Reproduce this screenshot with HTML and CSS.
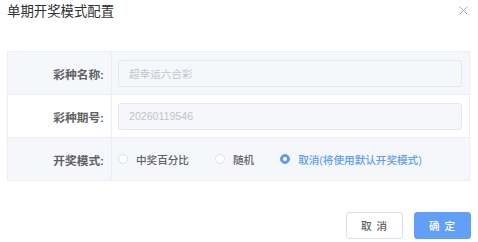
FILE: index.html
```html
<!DOCTYPE html>
<html lang="zh">
<head>
    <meta charset="UTF-8">
    <title>单期开奖模式配置</title>
    <link rel="stylesheet" href="styles.css">
</head>
<body>
    <div class="dialog">
        <div class="dialog-header">
            <span class="dialog-title">单期开奖模式配置</span>
            <svg class="dialog-close" width="9" height="9" viewBox="0 0 9 9">
                <path d="M0.5 0.5 L8.5 8.5 M8.5 0.5 L0.5 8.5" stroke="#a8abb2" stroke-width="1" fill="none"/>
            </svg>
        </div>

        <div class="form-table">
            <div class="form-row striped">
                <div class="form-label">彩种名称:</div>
                <div class="form-value">
                    <div class="input disabled">超幸运六合彩</div>
                </div>
            </div>
            <div class="form-row">
                <div class="form-label">彩种期号:</div>
                <div class="form-value">
                    <div class="input disabled">20260119546</div>
                </div>
            </div>
            <div class="form-row striped">
                <div class="form-label">开奖模式:</div>
                <div class="form-value radios">
                    <label class="radio"><span class="radio-dot"></span>中奖百分比</label>
                    <label class="radio"><span class="radio-dot"></span>随机</label>
                    <label class="radio checked"><span class="radio-dot"></span>取消(将使用默认开奖模式)</label>
                </div>
            </div>
        </div>

        <div class="dialog-footer">
            <button class="btn">取 消</button>
            <button class="btn btn-primary">确 定</button>
        </div>
    </div>
</body>
</html>
```

FILE: styles.css
```css
body {
    margin: 0;
    background: #fff;
    font-family: "Liberation Sans", "Noto Sans CJK SC", sans-serif;
}

.dialog {
    width: 478px;
    padding: 0 8px 0 7px;
    box-sizing: border-box;
}

.dialog-header {
    height: 51px;
    display: flex;
    justify-content: space-between;
    align-items: flex-start;
}

.dialog-title {
    margin-top: 3px;
    font-size: 13.4px;
    line-height: 18px;
    color: #303133;
}

.dialog-close {
    margin-top: 6px;
    margin-right: 2px;
}

.form-table {
    border: 1px solid #ebeef5;
    border-bottom: none;
}

.form-row {
    display: flex;
    height: 42px;
    border-bottom: 1px solid #ebeef5;
    background: #fff;
}

.form-row.striped {
    background: #f5f7fa;
}

.form-label {
    width: 104px;
    flex-shrink: 0;
    border-right: 1px solid #ebeef5;
    display: flex;
    align-items: center;
    justify-content: flex-end;
    padding-right: 7px;
    box-sizing: border-box;
    font-size: 11.7px;
    font-weight: 700;
    color: #606266;
}

.form-value {
    flex: 1;
    display: flex;
    align-items: center;
    padding: 0 7px 0 6px;
}

.input {
    flex: 1;
    height: 27px;
    box-sizing: border-box;
    border: 1px solid #e4e7ed;
    border-radius: 3px;
    padding: 0 10px;
    display: flex;
    align-items: center;
    font-size: 10.6px;
}

.input.disabled {
    background: #f5f7fa;
    color: #c0c4cc;
}

.radios {
    gap: 26px;
}

.radio {
    display: flex;
    align-items: center;
    font-size: 10.6px;
    font-weight: 500;
    color: #606266;
}

.radio-dot {
    width: 10px;
    height: 10px;
    box-sizing: border-box;
    border: 1px solid #dcdfe6;
    border-radius: 50%;
    background: #fff;
    margin-right: 8px;
    position: relative;
}

.radio.checked {
    color: #5d9df5;
}

.radio.checked .radio-dot {
    border-color: #5d9df5;
    background: #5d9df5;
}

.radio.checked .radio-dot::after {
    content: "";
    position: absolute;
    width: 4px;
    height: 4px;
    border-radius: 50%;
    background: #fff;
    top: 2px;
    left: 2px;
}

.dialog-footer {
    display: flex;
    justify-content: flex-end;
    gap: 11px;
    margin-top: 31px;
}

.btn {
    width: 57px;
    height: 27px;
    border: 1px solid #dcdfe6;
    border-radius: 3px;
    background: #fff;
    color: #606266;
    font-family: inherit;
    font-size: 10.6px;
    font-weight: 500;
    padding: 0;
    letter-spacing: 1px;
}

.btn-primary {
    background: #61a0f6;
    border-color: #61a0f6;
    color: #fff;
    margin-right: -1px;
}
```
